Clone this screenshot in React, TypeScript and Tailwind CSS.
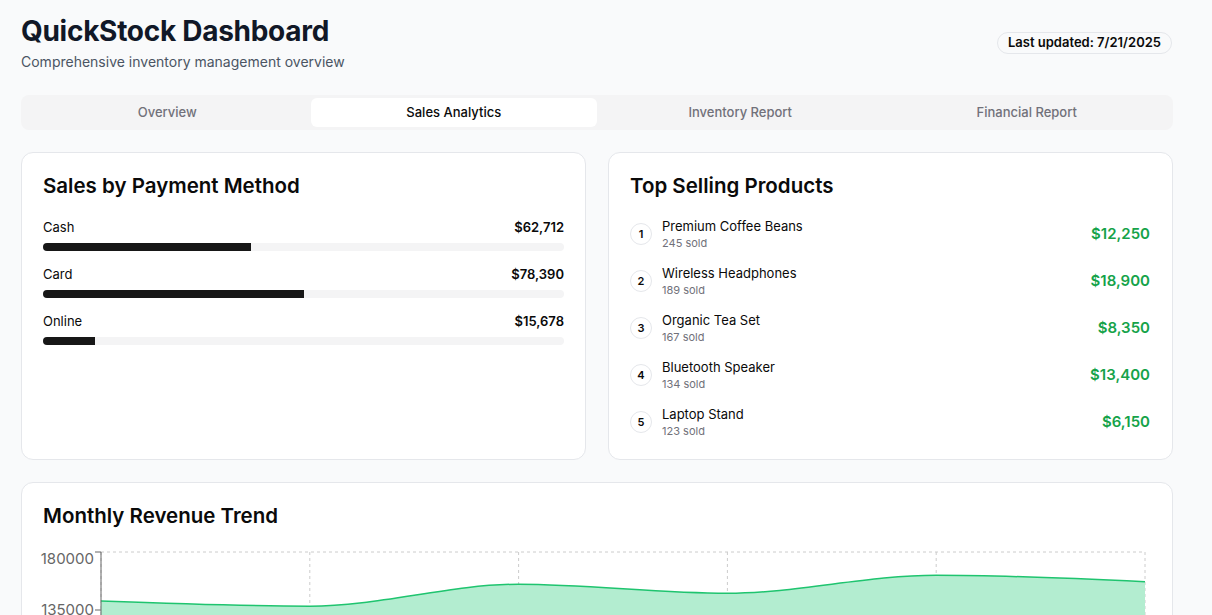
import React from 'react';

const tabs = ['Overview', 'Sales Analytics', 'Inventory Report', 'Financial Report'];

const payments = [
  { label: 'Cash', amount: 62712 },
  { label: 'Card', amount: 78390 },
  { label: 'Online', amount: 15678 },
];

const products = [
  { name: 'Premium Coffee Beans', sold: 245, revenue: 12250 },
  { name: 'Wireless Headphones', sold: 189, revenue: 18900 },
  { name: 'Organic Tea Set', sold: 167, revenue: 8350 },
  { name: 'Bluetooth Speaker', sold: 134, revenue: 13400 },
  { name: 'Laptop Stand', sold: 123, revenue: 6150 },
];

const revenue = [142000, 138000, 155000, 148000, 162000, 157000];

const fmt = (n: number) => '$' + n.toLocaleString('en-US');

// chart geometry (svg coords)
const LEFT = 58;
const RIGHT = 1102;
const TOP = 5;
const STEP = 58;
const MAX = 180000;
const PLOT_H = STEP * 4;

const yOf = (v: number) => TOP + ((MAX - v) / MAX) * PLOT_H;

// d3-style monotoneX curve
function monotonePath(pts: [number, number][]) {
  const n = pts.length;
  const t: number[] = new Array(n).fill(0);
  const sign = (x: number) => (x < 0 ? -1 : x > 0 ? 1 : 0);
  for (let i = 1; i < n - 1; i++) {
    const [x0, y0] = pts[i - 1];
    const [x1, y1] = pts[i];
    const [x2, y2] = pts[i + 1];
    const h0 = x1 - x0;
    const h1 = x2 - x1;
    const s0 = (y1 - y0) / h0;
    const s1 = (y2 - y1) / h1;
    const p = (s0 * h1 + s1 * h0) / (h0 + h1);
    t[i] = (sign(s0) + sign(s1)) * Math.min(Math.abs(s0), Math.abs(s1), 0.5 * Math.abs(p)) || 0;
  }
  const s2 = (i: number, j: number) => {
    const h = pts[j][0] - pts[i][0];
    return (pts[j][1] - pts[i][1]) / h;
  };
  t[0] = (3 * s2(0, 1) - t[1]) / 2;
  t[n - 1] = (3 * s2(n - 2, n - 1) - t[n - 2]) / 2;
  let d = `M${pts[0][0]},${pts[0][1]}`;
  for (let i = 0; i < n - 1; i++) {
    const [x0, y0] = pts[i];
    const [x1, y1] = pts[i + 1];
    const dx = (x1 - x0) / 3;
    d += ` C${x0 + dx},${y0 + dx * t[i]} ${x1 - dx},${y1 - dx * t[i + 1]} ${x1},${y1}`;
  }
  return d;
}

const RevenueChart = () => {
  const xs = revenue.map((_, i) => LEFT + ((RIGHT - LEFT) / (revenue.length - 1)) * i);
  const pts = revenue.map((v, i) => [xs[i], yOf(v)] as [number, number]);
  const line = monotonePath(pts);
  const bottom = TOP + PLOT_H;
  const area = `${line} L${RIGHT},${bottom} L${LEFT},${bottom} Z`;
  const ticks = [180000, 135000, 90000, 45000, 0];

  return (
    <svg width="1107" height="280" viewBox="0 0 1107 280" className="block overflow-visible">
      {/* grid */}
      <g stroke="#ccc" strokeDasharray="3 3" fill="none">
        {ticks.map((v) => (
          <line key={v} x1={LEFT} x2={RIGHT} y1={yOf(v)} y2={yOf(v)} />
        ))}
        {xs.map((x) => (
          <line key={x} x1={x} x2={x} y1={TOP} y2={bottom} />
        ))}
      </g>
      <path d={area} fill="#b3edd0" />
      <path d={line} fill="none" stroke="#1fc46f" strokeWidth={1.5} />
      {/* y axis */}
      <line x1={LEFT} x2={LEFT} y1={TOP} y2={bottom} stroke="#666" />
      {ticks.map((v, i) => (
        <g key={v}>
          <line x1={LEFT - 6} x2={LEFT} y1={yOf(v)} y2={yOf(v)} stroke="#666" />
          <text
            x={LEFT - 7}
            y={yOf(v) + (i === 0 ? 7 : 0)}
            dy="0.355em"
            textAnchor="end"
            fill="#666"
            fontSize="15"
          >
            {v}
          </text>
        </g>
      ))}
    </svg>
  );
};

export default function App() {
  const total = payments.reduce((s, p) => s + p.amount, 0);

  return (
    <div className="min-h-screen bg-[#f9fafb] font-['Inter','Liberation_Sans',sans-serif] text-[#0a0a0a]">
      <div className="max-w-[1152px] ml-[21px] pt-[13px] pb-8">
        {/* Header */}
        <div className="flex items-center justify-between mb-[23px]">
          <div>
            <h1 className="text-[28px] leading-9 font-bold tracking-[-0.01em] text-[#111827]">QuickStock Dashboard</h1>
            <p className="text-sm leading-5 text-[#4b5563] mt-[3px]">Comprehensive inventory management overview</p>
          </div>
          <span className="rounded-full border border-gray-200 px-2.5 h-[22px] flex items-center text-[13px] font-semibold mr-[1px]">
            Last updated: 7/21/2025
          </span>
        </div>

        {/* Tabs */}
        <div className="grid grid-cols-4 bg-[#f4f4f5] rounded-lg p-[3px] h-[35px] mb-[22px]">
          {tabs.map((tab) => (
            <div
              key={tab}
              className={
                tab === 'Sales Analytics'
                  ? 'flex items-center justify-center rounded-md bg-white text-[13px] font-medium text-[#0a0a0a]'
                  : 'flex items-center justify-center text-[13px] font-medium text-[#71717a]'
              }
            >
              {tab}
            </div>
          ))}
        </div>

        {/* Cards row */}
        <div className="grid grid-cols-2 gap-[22px] mb-[22px]">
          <div className="bg-white border border-gray-200 rounded-xl px-[21px] pt-[19px] pb-5">
            <h2 className="text-[20.5px] leading-7 font-semibold mb-[17px]">Sales by Payment Method</h2>
            <div className="flex flex-col gap-[13px]">
              {payments.map((p) => (
                <div key={p.label}>
                  <div className="flex justify-between items-center text-[13px] leading-5 mb-1.5">
                    <span>{p.label}</span>
                    <span className="font-semibold">{fmt(p.amount)}</span>
                  </div>
                  <div className="h-2 rounded-full bg-[#f4f4f5] overflow-hidden">
                    <div className="h-full bg-[#171717]" style={{ width: `${(p.amount / total) * 100}%` }} />
                  </div>
                </div>
              ))}
            </div>
          </div>

          <div className="bg-white border border-gray-200 rounded-xl px-[21px] pt-[19px] pb-5">
            <h2 className="text-[20.5px] leading-7 font-semibold mb-[17px]">Top Selling Products</h2>
            <div className="flex flex-col gap-[13px]">
              {products.map((p, i) => (
                <div key={p.name} className="flex items-center justify-between">
                  <div className="flex items-center gap-[10px]">
                    <div className="w-[22px] h-[22px] rounded-full border border-gray-200 flex items-center justify-center text-[11px] font-semibold">
                      {i + 1}
                    </div>
                    <div>
                      <div className="text-[13px] leading-[18px]">{p.name}</div>
                      <div className="text-[11px] leading-4 text-[#71717a]">{p.sold} sold</div>
                    </div>
                  </div>
                  <span className="text-[15px] font-semibold text-[#16a34a] mr-[1px]">{fmt(p.revenue)}</span>
                </div>
              ))}
            </div>
          </div>
        </div>

        {/* Revenue trend */}
        <div className="bg-white border border-gray-200 rounded-xl px-[21px] pt-[19px] pb-5">
          <h2 className="text-[20.5px] leading-7 font-semibold mb-[17px]">Monthly Revenue Trend</h2>
          <RevenueChart />
        </div>
      </div>
    </div>
  );
}
